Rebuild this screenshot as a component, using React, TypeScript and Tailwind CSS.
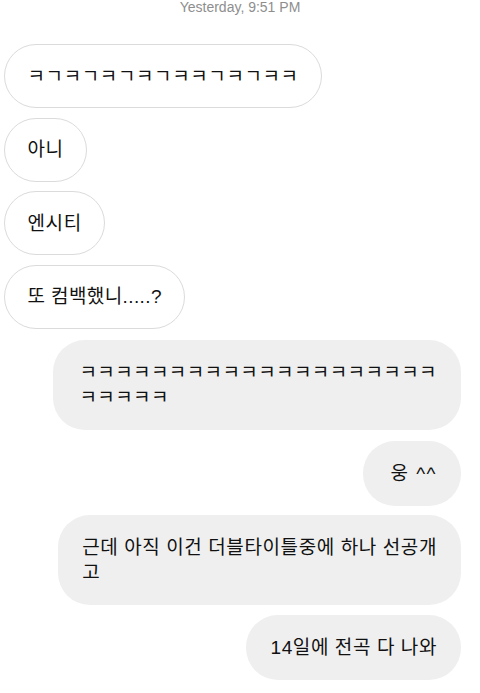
import React from "react";

type Msg = {
    lines: string[];
    mine: boolean;
    extra?: string;
};

const messages: Msg[] = [
    { lines: ["ㅋㄱㅋㄱㅋㄱㅋㄱㅋㅋㄱㅋㄱㅋㅋ"], mine: false, extra: "tracking-[0.6px]" },
    { lines: ["아니"], mine: false, extra: "tracking-[0.6px]" },
    { lines: ["엔시티"], mine: false, extra: "tracking-[0.6px]" },
    { lines: ["또 컴백했니.....?"], mine: false, extra: "tracking-[0.4px]" },
    {
        lines: ["ㅋㅋㅋㅋㅋㅋㅋㅋㅋㅋㅋㅋㅋㅋㅋㅋㅋㅋㅋㅋ", "ㅋㅋㅋㅋㅋ"],
        mine: true,
        extra: "tracking-[0.4px] pl-[26px] mt-[2px]",
    },
    { lines: ["웅 ^^"], mine: true, extra: "tracking-[1.5px] pl-[27px] mt-[1px]" },
    {
        lines: ["근데 아직 이건 더블타이틀중에 하나 선공개", "고"],
        mine: true,
        extra: "tracking-[0.6px]",
    },
    { lines: ["14일에 전곡 다 나와"], mine: true, extra: "tracking-[0.6px]" },
];

function Bubble({ msg }: { msg: Msg }) {
    const base =
        "rounded-[32px] text-[19px] leading-[25px] text-[#111] whitespace-nowrap";
    const cls = msg.mine
        ? `${base} self-end mr-[19px] bg-[#efefef] px-6 py-5`
        : `${base} self-start ml-[4px] bg-white border-[1.5px] border-[#dbdbdb] px-[22.5px] py-[18.5px]`;
    return (
        <div className={`${cls} ${msg.extra ?? ""}`}>
            {msg.lines.map((line, i) => (
                <div key={i}>{line}</div>
            ))}
        </div>
    );
}

export default function App() {
    return (
        <div
            className="w-[480px] h-[693px] bg-white overflow-hidden"
            style={{ fontFamily: '"Liberation Sans", "Noto Sans CJK KR", sans-serif' }}
        >
            <div className="text-center text-[14px] leading-4 text-[#8e8e8e] -mt-[1px]">
                Yesterday, 9:51 PM
            </div>
            <div className="flex flex-col gap-[9.5px] mt-[29px]">
                {messages.map((m, i) => (
                    <Bubble key={i} msg={m} />
                ))}
            </div>
        </div>
    );
}
